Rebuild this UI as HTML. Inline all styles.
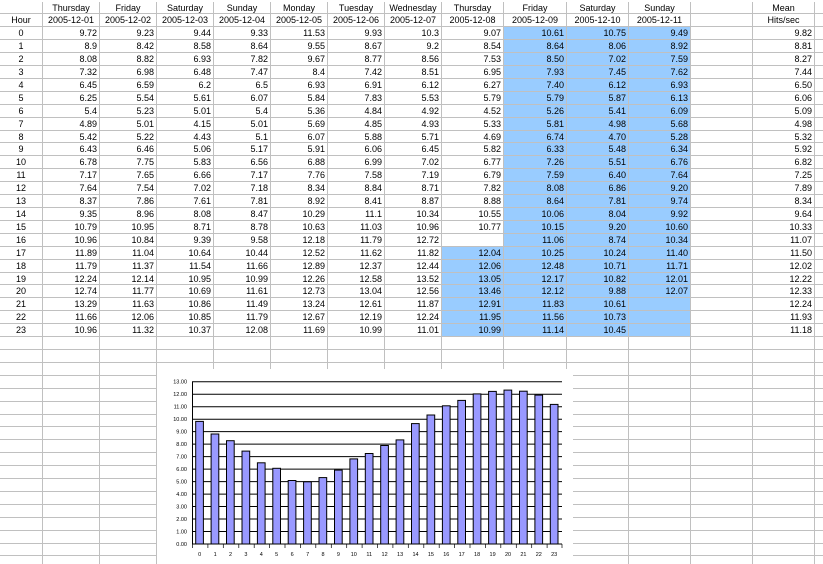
<!DOCTYPE html>
<html><head><meta charset="utf-8"><style>
html,body{margin:0;padding:0;background:#fff;width:823px;height:564px;overflow:hidden;position:relative;font-family:"Liberation Sans",sans-serif;font-size:9px;color:#000}
#g{position:absolute;left:0;top:1.5px}
.r{display:flex;height:12.92px}
.r>span{flex:none;box-sizing:border-box;border-right:1px solid #c0c0c0;border-bottom:1px solid #c0c0c0;text-align:right;padding-right:2px;line-height:12px;height:12.92px;white-space:nowrap;overflow:hidden}
.r>span:nth-child(1){width:43px;text-align:center;padding:0}
.r>span:nth-child(2),.r>span:nth-child(3),.r>span:nth-child(4),.r>span:nth-child(5),.r>span:nth-child(6),.r>span:nth-child(7),.r>span:nth-child(8){width:57px}
.r>span:nth-child(9){width:62px}
.r>span:nth-child(10){width:63px}
.r>span:nth-child(11),.r>span:nth-child(12),.r>span:nth-child(13),.r>span:nth-child(14){width:62px}
.r>span:nth-child(15){width:61px}
.r>span:nth-child(16){width:62px}
.r>span:nth-child(17){width:10px}
.h>span{text-align:center;padding:0}
.r>span.b{background:#99ccff}
#chart{position:absolute;left:157px;top:369px;width:416px;height:200px;background:#fff}
</style></head><body>
<div id="g">
<div class="r h"><span></span><span>Thursday</span><span>Friday</span><span>Saturday</span><span>Sunday</span><span>Monday</span><span>Tuesday</span><span>Wednesday</span><span>Thursday</span><span>Friday</span><span>Saturday</span><span>Sunday</span><span></span><span>Mean</span><span></span></div>
<div class="r h"><span>Hour</span><span>2005-12-01</span><span>2005-12-02</span><span>2005-12-03</span><span>2005-12-04</span><span>2005-12-05</span><span>2005-12-06</span><span>2005-12-07</span><span>2005-12-08</span><span>2005-12-09</span><span>2005-12-10</span><span>2005-12-11</span><span></span><span>Hits/sec</span><span></span></div>
<div class="r"><span>0</span><span>9.72</span><span>9.23</span><span>9.44</span><span>9.33</span><span>11.53</span><span>9.93</span><span>10.3</span><span>9.07</span><span class="b">10.61</span><span class="b">10.75</span><span class="b">9.49</span><span></span><span>9.82</span><span></span></div>
<div class="r"><span>1</span><span>8.9</span><span>8.42</span><span>8.58</span><span>8.64</span><span>9.55</span><span>8.67</span><span>9.2</span><span>8.54</span><span class="b">8.64</span><span class="b">8.06</span><span class="b">8.92</span><span></span><span>8.81</span><span></span></div>
<div class="r"><span>2</span><span>8.08</span><span>8.82</span><span>6.93</span><span>7.82</span><span>9.67</span><span>8.77</span><span>8.56</span><span>7.53</span><span class="b">8.50</span><span class="b">7.02</span><span class="b">7.59</span><span></span><span>8.27</span><span></span></div>
<div class="r"><span>3</span><span>7.32</span><span>6.98</span><span>6.48</span><span>7.47</span><span>8.4</span><span>7.42</span><span>8.51</span><span>6.95</span><span class="b">7.93</span><span class="b">7.45</span><span class="b">7.62</span><span></span><span>7.44</span><span></span></div>
<div class="r"><span>4</span><span>6.45</span><span>6.59</span><span>6.2</span><span>6.5</span><span>6.93</span><span>6.91</span><span>6.12</span><span>6.27</span><span class="b">7.40</span><span class="b">6.12</span><span class="b">6.93</span><span></span><span>6.50</span><span></span></div>
<div class="r"><span>5</span><span>6.25</span><span>5.54</span><span>5.61</span><span>6.07</span><span>5.84</span><span>7.83</span><span>5.53</span><span>5.79</span><span class="b">5.79</span><span class="b">5.87</span><span class="b">6.13</span><span></span><span>6.06</span><span></span></div>
<div class="r"><span>6</span><span>5.4</span><span>5.23</span><span>5.01</span><span>5.4</span><span>5.36</span><span>4.84</span><span>4.92</span><span>4.52</span><span class="b">5.26</span><span class="b">5.41</span><span class="b">6.09</span><span></span><span>5.09</span><span></span></div>
<div class="r"><span>7</span><span>4.89</span><span>5.01</span><span>4.15</span><span>5.01</span><span>5.69</span><span>4.85</span><span>4.93</span><span>5.33</span><span class="b">5.81</span><span class="b">4.98</span><span class="b">5.68</span><span></span><span>4.98</span><span></span></div>
<div class="r"><span>8</span><span>5.42</span><span>5.22</span><span>4.43</span><span>5.1</span><span>6.07</span><span>5.88</span><span>5.71</span><span>4.69</span><span class="b">6.74</span><span class="b">4.70</span><span class="b">5.28</span><span></span><span>5.32</span><span></span></div>
<div class="r"><span>9</span><span>6.43</span><span>6.46</span><span>5.06</span><span>5.17</span><span>5.91</span><span>6.06</span><span>6.45</span><span>5.82</span><span class="b">6.33</span><span class="b">5.48</span><span class="b">6.34</span><span></span><span>5.92</span><span></span></div>
<div class="r"><span>10</span><span>6.78</span><span>7.75</span><span>5.83</span><span>6.56</span><span>6.88</span><span>6.99</span><span>7.02</span><span>6.77</span><span class="b">7.26</span><span class="b">5.51</span><span class="b">6.76</span><span></span><span>6.82</span><span></span></div>
<div class="r"><span>11</span><span>7.17</span><span>7.65</span><span>6.66</span><span>7.17</span><span>7.76</span><span>7.58</span><span>7.19</span><span>6.79</span><span class="b">7.59</span><span class="b">6.40</span><span class="b">7.64</span><span></span><span>7.25</span><span></span></div>
<div class="r"><span>12</span><span>7.64</span><span>7.54</span><span>7.02</span><span>7.18</span><span>8.34</span><span>8.84</span><span>8.71</span><span>7.82</span><span class="b">8.08</span><span class="b">6.86</span><span class="b">9.20</span><span></span><span>7.89</span><span></span></div>
<div class="r"><span>13</span><span>8.37</span><span>7.86</span><span>7.61</span><span>7.81</span><span>8.92</span><span>8.41</span><span>8.87</span><span>8.88</span><span class="b">8.64</span><span class="b">7.81</span><span class="b">9.74</span><span></span><span>8.34</span><span></span></div>
<div class="r"><span>14</span><span>9.35</span><span>8.96</span><span>8.08</span><span>8.47</span><span>10.29</span><span>11.1</span><span>10.34</span><span>10.55</span><span class="b">10.06</span><span class="b">8.04</span><span class="b">9.92</span><span></span><span>9.64</span><span></span></div>
<div class="r"><span>15</span><span>10.79</span><span>10.95</span><span>8.71</span><span>8.78</span><span>10.63</span><span>11.03</span><span>10.96</span><span>10.77</span><span class="b">10.15</span><span class="b">9.20</span><span class="b">10.60</span><span></span><span>10.33</span><span></span></div>
<div class="r"><span>16</span><span>10.96</span><span>10.84</span><span>9.39</span><span>9.58</span><span>12.18</span><span>11.79</span><span>12.72</span><span></span><span class="b">11.06</span><span class="b">8.74</span><span class="b">10.34</span><span></span><span>11.07</span><span></span></div>
<div class="r"><span>17</span><span>11.89</span><span>11.04</span><span>10.64</span><span>10.44</span><span>12.52</span><span>11.62</span><span>11.82</span><span class="b">12.04</span><span class="b">10.25</span><span class="b">10.24</span><span class="b">11.40</span><span></span><span>11.50</span><span></span></div>
<div class="r"><span>18</span><span>11.79</span><span>11.37</span><span>11.54</span><span>11.66</span><span>12.89</span><span>12.37</span><span>12.44</span><span class="b">12.06</span><span class="b">12.48</span><span class="b">10.71</span><span class="b">11.71</span><span></span><span>12.02</span><span></span></div>
<div class="r"><span>19</span><span>12.24</span><span>12.14</span><span>10.95</span><span>10.99</span><span>12.26</span><span>12.58</span><span>13.52</span><span class="b">13.05</span><span class="b">12.17</span><span class="b">10.82</span><span class="b">12.01</span><span></span><span>12.22</span><span></span></div>
<div class="r"><span>20</span><span>12.74</span><span>11.77</span><span>10.69</span><span>11.61</span><span>12.73</span><span>13.04</span><span>12.56</span><span class="b">13.46</span><span class="b">12.12</span><span class="b">9.88</span><span class="b">12.07</span><span></span><span>12.33</span><span></span></div>
<div class="r"><span>21</span><span>13.29</span><span>11.63</span><span>10.86</span><span>11.49</span><span>13.24</span><span>12.61</span><span>11.87</span><span class="b">12.91</span><span class="b">11.83</span><span class="b">10.61</span><span class="b"></span><span></span><span>12.24</span><span></span></div>
<div class="r"><span>22</span><span>11.66</span><span>12.06</span><span>10.85</span><span>11.79</span><span>12.67</span><span>12.19</span><span>12.24</span><span class="b">11.95</span><span class="b">11.56</span><span class="b">10.73</span><span class="b"></span><span></span><span>11.93</span><span></span></div>
<div class="r"><span>23</span><span>10.96</span><span>11.32</span><span>10.37</span><span>12.08</span><span>11.69</span><span>10.99</span><span>11.01</span><span class="b">10.99</span><span class="b">11.14</span><span class="b">10.45</span><span class="b"></span><span></span><span>11.18</span><span></span></div>
<div class="r"><span></span><span></span><span></span><span></span><span></span><span></span><span></span><span></span><span></span><span></span><span></span><span></span><span></span><span></span><span></span></div>
<div class="r"><span></span><span></span><span></span><span></span><span></span><span></span><span></span><span></span><span></span><span></span><span></span><span></span><span></span><span></span><span></span></div>
<div class="r"><span></span><span></span><span></span><span></span><span></span><span></span><span></span><span></span><span></span><span></span><span></span><span></span><span></span><span></span><span></span></div>
<div class="r"><span></span><span></span><span></span><span></span><span></span><span></span><span></span><span></span><span></span><span></span><span></span><span></span><span></span><span></span><span></span></div>
<div class="r"><span></span><span></span><span></span><span></span><span></span><span></span><span></span><span></span><span></span><span></span><span></span><span></span><span></span><span></span><span></span></div>
<div class="r"><span></span><span></span><span></span><span></span><span></span><span></span><span></span><span></span><span></span><span></span><span></span><span></span><span></span><span></span><span></span></div>
<div class="r"><span></span><span></span><span></span><span></span><span></span><span></span><span></span><span></span><span></span><span></span><span></span><span></span><span></span><span></span><span></span></div>
<div class="r"><span></span><span></span><span></span><span></span><span></span><span></span><span></span><span></span><span></span><span></span><span></span><span></span><span></span><span></span><span></span></div>
<div class="r"><span></span><span></span><span></span><span></span><span></span><span></span><span></span><span></span><span></span><span></span><span></span><span></span><span></span><span></span><span></span></div>
<div class="r"><span></span><span></span><span></span><span></span><span></span><span></span><span></span><span></span><span></span><span></span><span></span><span></span><span></span><span></span><span></span></div>
<div class="r"><span></span><span></span><span></span><span></span><span></span><span></span><span></span><span></span><span></span><span></span><span></span><span></span><span></span><span></span><span></span></div>
<div class="r"><span></span><span></span><span></span><span></span><span></span><span></span><span></span><span></span><span></span><span></span><span></span><span></span><span></span><span></span><span></span></div>
<div class="r"><span></span><span></span><span></span><span></span><span></span><span></span><span></span><span></span><span></span><span></span><span></span><span></span><span></span><span></span><span></span></div>
<div class="r"><span></span><span></span><span></span><span></span><span></span><span></span><span></span><span></span><span></span><span></span><span></span><span></span><span></span><span></span><span></span></div>
<div class="r"><span></span><span></span><span></span><span></span><span></span><span></span><span></span><span></span><span></span><span></span><span></span><span></span><span></span><span></span><span></span></div>
<div class="r"><span></span><span></span><span></span><span></span><span></span><span></span><span></span><span></span><span></span><span></span><span></span><span></span><span></span><span></span><span></span></div>
<div class="r"><span></span><span></span><span></span><span></span><span></span><span></span><span></span><span></span><span></span><span></span><span></span><span></span><span></span><span></span><span></span></div>
<div class="r"><span></span><span></span><span></span><span></span><span></span><span></span><span></span><span></span><span></span><span></span><span></span><span></span><span></span><span></span><span></span></div>
</div>
<div id="chart">
<svg width="416" height="195" viewBox="0 0 416 195" xmlns="http://www.w3.org/2000/svg" font-family="Liberation Sans, sans-serif" font-size="5.5" fill="#000">
<g stroke="#000" stroke-width="1">
<line x1="35" y1="175" x2="405" y2="175"/><line x1="35" y1="162.5" x2="405" y2="162.5"/><line x1="35" y1="150" x2="405" y2="150"/><line x1="35" y1="137.5" x2="405" y2="137.5"/><line x1="35" y1="125.1" x2="405" y2="125.1"/><line x1="35" y1="112.6" x2="405" y2="112.6"/><line x1="35" y1="100.1" x2="405" y2="100.1"/><line x1="35" y1="87.6" x2="405" y2="87.6"/><line x1="35" y1="75.1" x2="405" y2="75.1"/><line x1="35" y1="62.6" x2="405" y2="62.6"/><line x1="35" y1="50.2" x2="405" y2="50.2"/><line x1="35" y1="37.7" x2="405" y2="37.7"/><line x1="35" y1="25.2" x2="405" y2="25.2"/><line x1="35" y1="12.7" x2="405" y2="12.7"/>
<line x1="35.5" y1="12.7" x2="35.5" y2="175"/>
</g>
<g fill="#9999ff" stroke="#000" stroke-width="1">
<rect x="38.7" y="52.4" width="7.7" height="122.6"/><rect x="54.1" y="65" width="7.7" height="110"/><rect x="69.5" y="71.7" width="7.7" height="103.3"/><rect x="85" y="82.1" width="7.7" height="92.9"/><rect x="100.4" y="93.8" width="7.7" height="81.2"/><rect x="115.8" y="99.3" width="7.7" height="75.7"/><rect x="131.2" y="111.5" width="7.7" height="63.5"/><rect x="146.6" y="112.8" width="7.7" height="62.2"/><rect x="162" y="108.6" width="7.7" height="66.4"/><rect x="177.5" y="101.1" width="7.7" height="73.9"/><rect x="192.9" y="89.9" width="7.7" height="85.1"/><rect x="208.3" y="84.5" width="7.7" height="90.5"/><rect x="223.7" y="76.5" width="7.7" height="98.5"/><rect x="239.1" y="70.9" width="7.7" height="104.1"/><rect x="254.5" y="54.6" width="7.7" height="120.4"/><rect x="270" y="46" width="7.7" height="129"/><rect x="285.4" y="36.8" width="7.7" height="138.2"/><rect x="300.8" y="31.4" width="7.7" height="143.6"/><rect x="316.2" y="24.9" width="7.7" height="150.1"/><rect x="331.6" y="22.4" width="7.7" height="152.6"/><rect x="347" y="21.1" width="7.7" height="153.9"/><rect x="362.5" y="22.2" width="7.7" height="152.8"/><rect x="377.9" y="26.1" width="7.7" height="148.9"/><rect x="393.3" y="35.4" width="7.7" height="139.6"/>
</g>
<g stroke="#000" stroke-width="0.7">
<line x1="35.5" y1="175" x2="35.5" y2="179"/><line x1="50.9" y1="175" x2="50.9" y2="179"/><line x1="66.3" y1="175" x2="66.3" y2="179"/><line x1="81.8" y1="175" x2="81.8" y2="179"/><line x1="97.2" y1="175" x2="97.2" y2="179"/><line x1="112.6" y1="175" x2="112.6" y2="179"/><line x1="128" y1="175" x2="128" y2="179"/><line x1="143.4" y1="175" x2="143.4" y2="179"/><line x1="158.8" y1="175" x2="158.8" y2="179"/><line x1="174.3" y1="175" x2="174.3" y2="179"/><line x1="189.7" y1="175" x2="189.7" y2="179"/><line x1="205.1" y1="175" x2="205.1" y2="179"/><line x1="220.5" y1="175" x2="220.5" y2="179"/><line x1="235.9" y1="175" x2="235.9" y2="179"/><line x1="251.3" y1="175" x2="251.3" y2="179"/><line x1="266.8" y1="175" x2="266.8" y2="179"/><line x1="282.2" y1="175" x2="282.2" y2="179"/><line x1="297.6" y1="175" x2="297.6" y2="179"/><line x1="313" y1="175" x2="313" y2="179"/><line x1="328.4" y1="175" x2="328.4" y2="179"/><line x1="343.8" y1="175" x2="343.8" y2="179"/><line x1="359.3" y1="175" x2="359.3" y2="179"/><line x1="374.7" y1="175" x2="374.7" y2="179"/><line x1="390.1" y1="175" x2="390.1" y2="179"/><line x1="405" y1="175" x2="405" y2="179"/>
</g>
<g text-anchor="end">
<text x="30" y="177">0.00</text><text x="30" y="164.5">1.00</text><text x="30" y="152">2.00</text><text x="30" y="139.5">3.00</text><text x="30" y="127.1">4.00</text><text x="30" y="114.6">5.00</text><text x="30" y="102.1">6.00</text><text x="30" y="89.6">7.00</text><text x="30" y="77.1">8.00</text><text x="30" y="64.6">9.00</text><text x="30" y="52.2">10.00</text><text x="30" y="39.7">11.00</text><text x="30" y="27.2">12.00</text><text x="30" y="14.7">13.00</text>
</g>
<g text-anchor="middle">
<text x="42.7" y="187">0</text><text x="58.1" y="187">1</text><text x="73.5" y="187">2</text><text x="88.9" y="187">3</text><text x="104.3" y="187">4</text><text x="119.7" y="187">5</text><text x="135.1" y="187">6</text><text x="150.6" y="187">7</text><text x="166" y="187">8</text><text x="181.4" y="187">9</text><text x="196.8" y="187">10</text><text x="212.2" y="187">11</text><text x="227.6" y="187">12</text><text x="243.1" y="187">13</text><text x="258.5" y="187">14</text><text x="273.9" y="187">15</text><text x="289.3" y="187">16</text><text x="304.7" y="187">17</text><text x="320.1" y="187">18</text><text x="335.6" y="187">19</text><text x="351" y="187">20</text><text x="366.4" y="187">21</text><text x="381.8" y="187">22</text><text x="397.2" y="187">23</text>
</g>
</svg>
</div>
</body></html>
